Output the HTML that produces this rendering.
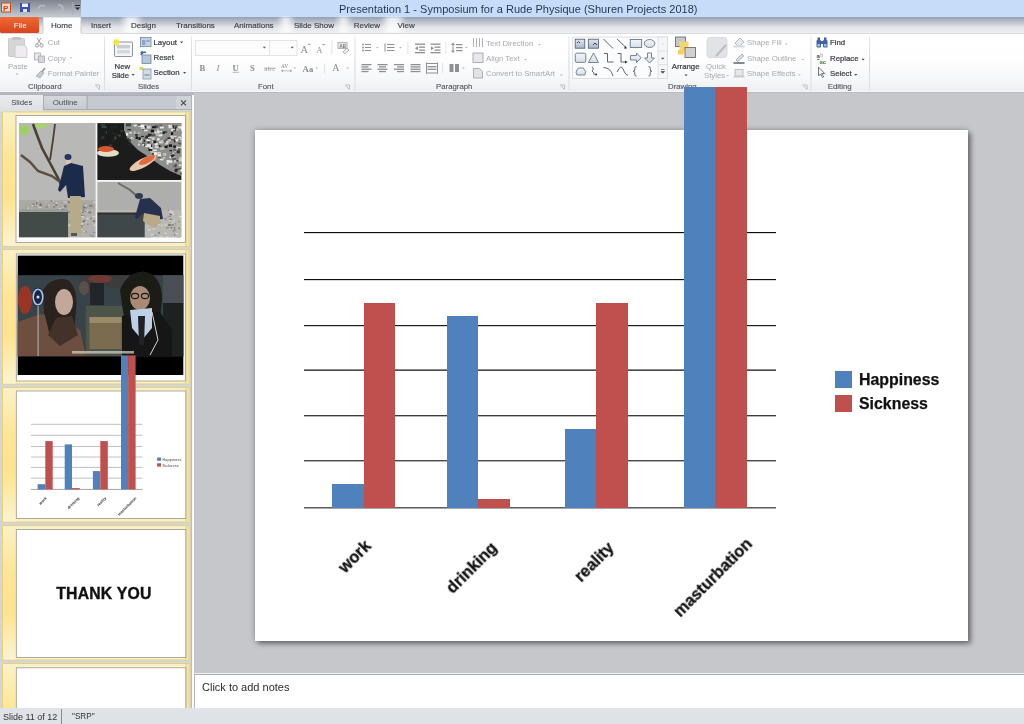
<!DOCTYPE html>
<html><head><meta charset="utf-8">
<style>
*{margin:0;padding:0;box-sizing:border-box}
html,body{width:1024px;height:724px;overflow:hidden;background:#c5c7cb;font-family:"Liberation Sans",sans-serif}
.a{position:absolute;will-change:transform}
.t{position:absolute;white-space:nowrap;line-height:1;will-change:transform}
#title{left:0;top:0;width:1024px;height:17px;background:#c8dcf6}
#qat{left:0;top:0;width:81px;height:17px;background:linear-gradient(#8f959d,#c9ced5)}
#tabs{left:0;top:17px;width:1024px;height:16px;background:linear-gradient(#aeb5bf,#e6e9ed 70%,#f4f5f7)}
#ribbon{left:0;top:33px;width:1024px;height:59px;background:linear-gradient(#fdfdfe,#f4f6f8 60%,#e9ecf0);border-top:1px solid #d5d9df}
.tab{font-size:8px;color:#3b3f45}
.rt{font-size:7.8px;color:#3a3d42}
.dis{color:#a5a8ad}
.sep{position:absolute;top:36px;width:1px;height:55px;background:#d8dce2}
.gl{font-size:7.8px;color:#5a5e64}
#pane{left:0;top:93px;width:192px;height:615px;background:#d6d9de}
#work{left:194px;top:93px;width:830px;height:581px;background:#c5c7cb}
#slide{left:255px;top:130px;width:713px;height:511px;background:#fff;box-shadow:0 0 6px rgba(0,0,0,.28),3px 3px 5px rgba(0,0,0,.38)}
#notes{left:194px;top:673px;width:830px;height:35px;background:#fff;border-top:1px solid #eef0f2;box-shadow:inset 0 1px 0 #a7abb2;border-left:1px solid #b4b8be}
#status{left:0;top:708px;width:1024px;height:16px;background:#dfe2e7}
.grid{position:absolute;left:304px;width:472px;height:1px;background:#1a1a1a}
.bar{position:absolute}
.b{background:#4f81bd}.r{background:#c0504d}
.lab{position:absolute;will-change:transform;font-size:16.3px;font-weight:bold;color:#111;-webkit-text-stroke:.3px #111;transform-origin:100% 0;transform:rotate(-45deg);white-space:nowrap;line-height:1}
.thumb{position:absolute;left:2px;width:188px;background:linear-gradient(90deg,#fbe49a,#fdf3c8 8%,#fef9e6 40%,#fdf5d3);border:1px solid #e9cf7f}
.tw{position:absolute;left:14px;width:170px;background:#fff;border:1px solid #b8b0a0}
</style></head><body>
<!--RIB-->
<svg class="a" style="left:0;top:0" width="1024" height="94" viewBox="0 0 1024 94">
<defs>
<linearGradient id="rg" x1="0" y1="0" x2="0" y2="1"><stop offset="0" stop-color="#ffffff"/><stop offset=".45" stop-color="#fefefe"/><stop offset=".75" stop-color="#f7f8f9"/><stop offset="1" stop-color="#eceef1"/></linearGradient>
<linearGradient id="tg" x1="0" y1="0" x2="0" y2="1"><stop offset="0" stop-color="#94a0b2"/><stop offset=".3" stop-color="#b9c0ca"/><stop offset=".65" stop-color="#e2e4e7"/><stop offset="1" stop-color="#eeeff1"/></linearGradient>
<filter id="glow" x="-50%" y="-20%" width="200%" height="140%"><feGaussianBlur stdDeviation="3 1"/></filter>
<linearGradient id="qg" x1="0" y1="0" x2="0" y2="1"><stop offset="0" stop-color="#7e858f"/><stop offset="1" stop-color="#c6cbd2"/></linearGradient>
<linearGradient id="fg" x1="0" y1="0" x2="0" y2="1"><stop offset="0" stop-color="#ec6a35"/><stop offset="1" stop-color="#d9441b"/></linearGradient>
<linearGradient id="sepg" x1="0" y1="0" x2="0" y2="1"><stop offset="0" stop-color="#e4e7eb"/><stop offset=".5" stop-color="#d2d6dc"/><stop offset="1" stop-color="#dfe2e6"/></linearGradient>
</defs>
<!-- title bar -->
<rect x="0" y="0" width="1024" height="17" fill="#c7dcf9"/>
<rect x="0" y="0" width="81" height="17" fill="url(#qg)"/>
<text x="339" y="12.7" font-family="Liberation Sans" font-size="11" fill="#1f3555" textLength="358.5">Presentation 1 - Symposium for a Rude Physique (Shuren Projects 2018)</text>
<!-- P icon -->
<rect x="1" y="2.5" width="10" height="10" rx="1" fill="#c94a1a"/>
<rect x="2" y="3.5" width="8" height="8" fill="#f6d5c3"/>
<text x="3" y="10.8" font-family="Liberation Sans" font-size="8" font-weight="bold" fill="#c2461c">P</text>
<!-- save -->
<rect x="20" y="3" width="10" height="9" fill="#3c4fb5"/>
<rect x="22" y="3.5" width="6" height="3.5" fill="#eef0fb"/>
<rect x="23" y="9" width="4" height="3" fill="#dfe3f5"/>
<!-- undo redo -->
<path d="M38 9 q2 -5 7 -3" stroke="#b6bac0" stroke-width="1.6" fill="none"/>
<path d="M49 7 l3 0 l-1.5 2z" fill="#9a9ea4"/>
<path d="M58 5 q5 0 5 4 q0 3 -4 3" stroke="#b9bdc3" stroke-width="1.5" fill="none"/>
<rect x="72" y="2" width="0.8" height="13" fill="#a8adb4"/>
<rect x="75" y="5" width="5" height="1" fill="#222"/>
<path d="M75 7.5 h5 l-2.5 2.6z" fill="#222"/>
<!-- tab row -->
<rect x="0" y="17" width="1024" height="16" fill="url(#tg)"/>
<g filter="url(#glow)" fill="#fff" opacity=".8">
<rect x="124" y="17" width="15" height="16"/>
<rect x="281" y="17" width="10" height="16"/>
<rect x="339" y="17" width="9" height="16"/>
<rect x="385" y="17" width="17" height="16"/>
</g>
<rect x="0" y="17" width="39" height="16" rx="1.5" fill="url(#fg)"/>
<text x="13.7" y="27.8" font-family="Liberation Sans" font-size="8" fill="#fff">File</text>
<rect x="43" y="17" width="38" height="17" fill="#fdfdfe" stroke="#bcc2ca" stroke-width=".8"/>
<g font-family="Liberation Sans" font-size="8" fill="#3d4147" stroke="#3d4147" stroke-width=".15">
<text x="51" y="27.8">Home</text>
<text x="91" y="27.8">Insert</text>
<text x="131" y="27.8">Design</text>
<text x="176" y="27.8">Transitions</text>
<text x="234" y="27.8">Animations</text>
<text x="294" y="27.8">Slide Show</text>
<text x="353.7" y="27.8">Review</text>
<text x="397.5" y="27.8">View</text>
</g>
<!-- ribbon body -->
<rect x="0" y="33" width="1024" height="59.5" fill="url(#rg)"/>
<rect x="0" y="33" width="43" height="0.8" fill="#cfd3d8"/>
<rect x="81" y="33" width="943" height="0.8" fill="#cfd3d8"/>
<rect x="0" y="91.2" width="1024" height=".8" fill="#f6f7f8"/><rect x="0" y="92" width="1024" height="2" fill="#b9bcc1"/>
<!-- separators -->
<g fill="url(#sepg)">
<rect x="104" y="36" width="1" height="55"/>
<rect x="191" y="36" width="1" height="55"/>
<rect x="354.5" y="36" width="1" height="55"/>
<rect x="568.5" y="36" width="1" height="55"/>
<rect x="810.5" y="36" width="1" height="55"/>
<rect x="869" y="36" width="1" height="55"/>
</g>
<!-- group labels -->
<g font-family="Liberation Sans" font-size="7.8" fill="#585c63" stroke="#585c63" stroke-width=".15">
<text x="28.1" y="89.3">Clipboard</text>
<text x="138" y="89.3">Slides</text>
<text x="258" y="89.3">Font</text>
<text x="436" y="89.3">Paragraph</text>
<text x="668" y="89.3">Drawing</text>
<text x="827.8" y="89.3">Editing</text>
</g>
<!-- launchers -->
<g stroke="#a6aab0" stroke-width=".7" fill="none">
<path d="M95 85 h4.5 v4.5 M96 86 l3 3"/>
<path d="M345 85 h4.5 v4.5 M346 86 l3 3"/>
<path d="M560 85 h4.5 v4.5 M561 86 l3 3"/>
<path d="M802.5 85 h4.5 v4.5 M803.5 86 l3 3"/>
</g>
<!-- Clipboard group -->
<rect x="8.5" y="38.5" width="16" height="18" rx="1" fill="#d6d6d8" stroke="#c2c2c5" stroke-width=".8"/>
<rect x="12" y="37" width="9" height="3" rx="1" fill="#c5c5c8"/>
<path d="M15 45 h9 l3 3 v9.5 h-12z" fill="#eeecef" stroke="#c5c3c8" stroke-width=".8"/>
<g font-family="Liberation Sans" font-size="7.8" fill="#a6a9ad">
<text x="7.9" y="68.8">Paste</text>
<text x="47.8" y="45.4">Cut</text>
<text x="47.8" y="60.6">Copy</text>
<text x="47.8" y="75.6">Format Painter</text>
</g>
<path d="M15.5 73.5 h3 l-1.5 1.5z" fill="#a6a9ad"/>
<path d="M69.5 57 h3 l-1.5 1.5z" fill="#c0c3c7"/>
<path d="M37 38 l4 6 M41 38 l-4 6" stroke="#9fa2a6" stroke-width="1"/>
<circle cx="37" cy="45.5" r="1.6" fill="none" stroke="#8d9094" stroke-width=".9"/>
<circle cx="41.5" cy="45.5" r="1.6" fill="none" stroke="#8d9094" stroke-width=".9"/>
<rect x="34.5" y="53" width="6" height="7" fill="#e8e8ea" stroke="#a9abae" stroke-width=".8"/>
<rect x="38.5" y="56" width="6" height="6.5" fill="#d5d6d8" stroke="#a9abae" stroke-width=".8"/>
<path d="M36 76 l5 -5 l3 2 l-4 5 z" fill="#c9cacc" stroke="#a3a5a8" stroke-width=".7"/>
<path d="M42 72 l3 -4" stroke="#8f9195" stroke-width="1.6"/>
<!-- Slides group -->

<rect x="114.5" y="42" width="18" height="14.5" rx="1" fill="#f5f6f8" stroke="#8d949d" stroke-width="1"/>
<rect x="117" y="45" width="13" height="3.5" fill="#c8ccd3"/>
<rect x="117" y="50" width="13" height="3.5" fill="#d5d9df"/>
<path d="M121.00 42.20 L118.23 43.04 L119.59 45.59 L117.04 44.23 L116.20 47.00 L115.36 44.23 L112.81 45.59 L114.17 43.04 L111.40 42.20 L114.17 41.36 L112.81 38.81 L115.36 40.17 L116.20 37.40 L117.04 40.17 L119.59 38.81 L118.23 41.36Z" fill="#f3e14c"/>
<g font-family="Liberation Sans" font-size="7.8" fill="#3a3d42" stroke="#3a3d42" stroke-width=".22">
<text x="114.6" y="68.9">New</text>
<text x="111.7" y="77.9">Slide</text>
<text x="153.5" y="45">Layout</text>
<text x="153.5" y="60.3">Reset</text>
<text x="153.5" y="75.4">Section</text>
</g>
<g fill="#444">
<path d="M131.5 74 h3.2 l-1.6 1.7z"/>
<path d="M180 41.5 h3.2 l-1.6 1.7z"/>
<path d="M183 72 h3.2 l-1.6 1.7z"/>
</g>
<rect x="140.5" y="37.5" width="10.5" height="9" fill="#c5d3e6" stroke="#6f86a6" stroke-width=".8"/>
<rect x="142" y="40" width="3.5" height="5" fill="#8ea4c4"/>
<rect x="146.5" y="40" width="3" height="2" fill="#8ea4c4"/>
<rect x="142" y="55" width="9" height="8.5" fill="#b7c6da" stroke="#6f86a6" stroke-width=".8"/>
<path d="M141 55 q1 -3.5 5 -2.5" stroke="#3a63b0" stroke-width="1.6" fill="none"/>
<path d="M140 52.5 l2.5 -2 l.5 3z" fill="#3a63b0"/>
<rect x="139.5" y="67" width="3.5" height="3" fill="#f0d24e"/>
<rect x="143" y="69" width="8" height="10" fill="#d3dbe6" stroke="#8796ab" stroke-width=".8"/>
<rect x="144.5" y="74" width="5" height="2" fill="#9aaac0"/>

<!-- Font group -->
<rect x="195.5" y="40.5" width="74" height="15" fill="#fcfcfd" stroke="#dfe2e6" stroke-width=".9"/>
<rect x="269.5" y="40.5" width="27.5" height="15" fill="#fcfcfd" stroke="#dfe2e6" stroke-width=".9"/>
<g fill="#555">
<path d="M262.8 46.8 h3.2 l-1.6 1.7z"/>
<path d="M290.6 46.8 h3.2 l-1.6 1.7z"/>
</g>
<g font-family="Liberation Serif" fill="#8c8d90">
<text x="300.6" y="52.6" font-size="10.5">A</text>
<text x="316.6" y="52.6" font-size="8">A</text>
</g>
<path d="M308 44.3 h2.5 M322.3 44.6 h2.6" stroke="#777" stroke-width=".8"/>
<rect x="331.5" y="40.5" width=".8" height="14" fill="#d9dce0"/>
<rect x="338" y="42.5" width="9" height="6" fill="#e9eaee" stroke="#a2a5aa" stroke-width=".8"/>
<text x="339.5" y="47.5" font-family="Liberation Sans" font-size="4.5" font-weight="bold" fill="#777">AB</text>
<path d="M343 52 l4 -4 l2 2 l-4 3.5z" fill="#f0f0f2" stroke="#9b9ea3" stroke-width=".8"/>
<g font-family="Liberation Serif" font-weight="bold" fill="#8a8b8e">
<text x="199.6" y="70.8" font-size="8.6">B</text>
<text x="216.5" y="70.8" font-size="8.6" font-style="italic" font-weight="normal">I</text>
<text x="232.6" y="70.8" font-size="8.6">U</text>
<text x="250" y="70.8" font-size="8.6">S</text>
<text x="264.3" y="70.8" font-size="7" font-weight="normal" textLength="11">abc</text>
<text x="281.1" y="67.8" font-size="5.5" font-weight="normal">AV</text>
<text x="302.4" y="71.9" font-size="8.6" textLength="10.8">Aa</text>
<text x="332.3" y="71.2" font-size="10" font-weight="normal">A</text>
</g>
<path d="M232.6 72.3 h6.4" stroke="#8a8b8e" stroke-width=".6"/>
<path d="M264 68.2 h11.5" stroke="#8a8b8e" stroke-width=".6"/>
<path d="M281.5 70.8 h10 M281.5 70.8 l1.5 -1 M281.5 70.8 l1.5 1 M291.5 70.8 l-1.5 -1 M291.5 70.8 l-1.5 1" stroke="#8a8b8e" stroke-width=".6"/>
<g fill="#b2b5b9">
<path d="M293.3 67.5 h2.8 l-1.4 1.5z"/>
<path d="M315.3 67.5 h2.8 l-1.4 1.5z"/>
<path d="M346.3 67.5 h2.8 l-1.4 1.5z"/>
</g>
<rect x="324" y="63.5" width=".8" height="10" fill="#d9dce0"/>
<!-- Paragraph group -->
<g fill="#8e9094">
<circle cx="363" cy="44.5" r=".9"/><circle cx="363" cy="47.5" r=".9"/><circle cx="363" cy="50.5" r=".9"/>
<rect x="365" y="44" width="6" height="1"/><rect x="365" y="47" width="6" height="1"/><rect x="365" y="50" width="6" height="1"/>
<rect x="384.5" y="43.5" width="1" height="8"/>
<rect x="387" y="44" width="7.5" height="1"/><rect x="387" y="47" width="7.5" height="1"/><rect x="387" y="50" width="7.5" height="1"/>
<rect x="415" y="43.5" width="10" height="1.3"/><rect x="419" y="46.5" width="6" height="1.3"/><rect x="419" y="49.5" width="6" height="1.3"/><rect x="415" y="52" width="10" height="1.3"/>
<rect x="430.5" y="43.5" width="10" height="1.3"/><rect x="434.5" y="46.5" width="6" height="1.3"/><rect x="434.5" y="49.5" width="6" height="1.3"/><rect x="430.5" y="52" width="10" height="1.3"/>
<path d="M415 48.3 l3 -2 v4z"/><path d="M434 48.3 l-3 -2 v4z"/>
<rect x="456" y="44" width="6.5" height="1.2"/><rect x="456" y="47" width="6.5" height="1.2"/><rect x="456" y="50" width="6.5" height="1.2"/>
<path d="M453 42.5 l2 2.5 h-4z M453 53 l2 -2.5 h-4z"/><rect x="452.5" y="44.5" width="1" height="6"/>
</g>
<g fill="#b2b5b9">
<path d="M376 47 h2.8 l-1.4 1.5z"/><path d="M399 47 h2.8 l-1.4 1.5z"/><path d="M464.8 47 h2.8 l-1.4 1.5z"/><path d="M462 67.5 h2.8 l-1.4 1.5z"/>
<path d="M538 44 h2.8 l-1.4 1.5z"/><path d="M524 59 h2.8 l-1.4 1.5z"/><path d="M560 74.5 h2.8 l-1.4 1.5z"/>
</g>
<rect x="407.5" y="42" width=".8" height="12" fill="#d9dce0"/>
<rect x="445.5" y="42" width=".8" height="12" fill="#d9dce0"/>
<rect x="442" y="63" width=".8" height="10" fill="#d9dce0"/>
<g fill="#8e9094">
<rect x="361.5" y="64" width="10" height="1.3"/><rect x="361.5" y="66.3" width="7" height="1.3"/><rect x="361.5" y="68.6" width="10" height="1.3"/><rect x="361.5" y="70.9" width="7" height="1.3"/>
<rect x="377.5" y="64" width="10" height="1.3"/><rect x="379" y="66.3" width="7" height="1.3"/><rect x="377.5" y="68.6" width="10" height="1.3"/><rect x="379" y="70.9" width="7" height="1.3"/>
<rect x="394" y="64" width="10" height="1.3"/><rect x="397" y="66.3" width="7" height="1.3"/><rect x="394" y="68.6" width="10" height="1.3"/><rect x="397" y="70.9" width="7" height="1.3"/>
<rect x="410.5" y="64" width="10" height="1.3"/><rect x="410.5" y="66.3" width="10" height="1.3"/><rect x="410.5" y="68.6" width="10" height="1.3"/><rect x="410.5" y="70.9" width="10" height="1.3"/>
<rect x="426" y="63" width="12" height="1"/><rect x="427.5" y="66" width="9" height="1.3"/><rect x="427.5" y="68.6" width="9" height="1.3"/><rect x="426" y="72.5" width="12" height="1"/>
<rect x="426" y="62.5" width="1" height="11"/><rect x="437" y="62.5" width="1" height="11"/>
<rect x="449.5" y="64" width="4" height="8"/><rect x="455" y="64" width="4" height="8"/>
</g>
<g stroke="#9b9ea3" stroke-width=".8" fill="none">
<path d="M473.5 38 v9 M476.5 38 v9 M479.5 38 v9 M482.5 38 v9"/>
<rect x="473" y="53" width="10" height="9.5" fill="#e7e8eb"/>
<path d="M473.5 68.5 h6 l3 3 v6.5 h-9z" fill="#e2e3e6"/>
</g>
<g font-family="Liberation Sans" font-size="7.8" fill="#a6a9ad">
<text x="486" y="45.8">Text Direction</text>
<text x="486" y="60.8">Align Text</text>
<text x="486" y="76.2">Convert to SmartArt</text>
</g>

<!-- Drawing group: shapes gallery -->
<defs>
<linearGradient id="shp" x1="0" y1="0" x2="0" y2="1"><stop offset="0" stop-color="#f4f6fa"/><stop offset="1" stop-color="#d5dde9"/></linearGradient>
<linearGradient id="shp2" x1="0" y1="0" x2="0" y2="1"><stop offset="0" stop-color="#dfe6ef"/><stop offset="1" stop-color="#a9b7c9"/></linearGradient>
</defs>
<rect x="572.5" y="37" width="95" height="41.5" fill="#fbfcfd" stroke="#dadde2" stroke-width=".9"/>
<rect x="658" y="37" width="9.5" height="41.5" fill="#f5f6f8" stroke="#dadde2" stroke-width=".9"/>
<path d="M658 51 h9.5 M658 64.7 h9.5" stroke="#dadde2" stroke-width=".9"/>
<path d="M661.5 44.5 h2.5 l-1.25 -1.3z" fill="#cfd2d6"/>
<path d="M661 57.8 h3.5 l-1.75 1.8z" fill="#4b4e53"/>
<path d="M661 69.5 h3.5 M661 71.5 h3.5 l-1.75 1.8z" stroke="#4b4e53" stroke-width=".7" fill="#4b4e53"/>
<g stroke="#4e5a69" stroke-width=".8" fill="url(#shp2)">
<rect x="575.2" y="39.2" width="9.6" height="9"/>
<rect x="588.3" y="39.2" width="10.2" height="9"/>
</g>
<path d="M577 43 l1.5 -1.5 l1.5 1.5 M593 45 l2 -2 l2 2" stroke="#222" stroke-width=".8" fill="none"/>
<g stroke="#3b4148" stroke-width=".8" fill="none">
<path d="M603.5 39 L613 48.5"/>
<path d="M617 39 L626 47.5"/>
<path d="M604 53.5 h3.5 v8.5 h6 M617.5 53.5 h3.5 v8.5 h5"/>
<path d="M603.5 67.5 q7 0 9.5 8.5"/>
<path d="M617 72 q4 -8 6 -3 q3 7 5 6"/>
<path d="M636.5 66.5 q-1.8 0 -1.8 2 v1.5 q0 1.3 -1.5 1.3 q1.5 0 1.5 1.3 v1.5 q0 2 1.8 2"/>
<path d="M648.5 66.5 q1.8 0 1.8 2 v1.5 q0 1.3 1.5 1.3 q-1.5 0 -1.5 1.3 v1.5 q0 2 -1.8 2"/>
<path d="M592 67 l1.5 2 l-1.5 2 l2 2 l0 2"/>
</g>
<path d="M625 46 l2.2 2.2 l-3 .5z M625 60.5 l2.5 1.5 l-2.5 1.5z" fill="#222"/>
<g stroke="#5a6878" stroke-width=".8" fill="url(#shp)">
<rect x="630.2" y="39.5" width="11.5" height="8"/>
<ellipse cx="649.6" cy="43.5" rx="5.3" ry="4"/>
<rect x="575.3" y="53.2" width="10.5" height="9.2" rx="1.5"/>
<path d="M593.5 53 L598.5 62.5 H588.5Z"/>
<path d="M630.5 55.5 h6 v-2.5 l4.7 4.8 l-4.7 4.8 v-2.6 h-6z"/>
<path d="M647.5 53 h4 v5 h3 l-5 5 l-5 -5 h3z"/>
<path d="M577 75 q-2 -3 0 -5 q1 -3 4 -2 q3 -1 3.5 2 q2 1 .8 3.5 l-.5 1.5z"/>
</g>
<circle cx="596" cy="74.5" r="1.1" fill="#444"/>
<!-- Arrange -->
<rect x="675.5" y="37" width="10" height="9.5" fill="#c8c9cc" stroke="#6c6f74" stroke-width=".9"/>
<rect x="679.5" y="41.5" width="9" height="12" fill="#f4d66c"/>
<rect x="685" y="47.5" width="10.5" height="10" fill="#cfd1d4" stroke="#6c6f74" stroke-width=".9"/>
<rect x="678" y="50" width="6.5" height="4.5" fill="#f2d160"/>
<g font-family="Liberation Sans" font-size="7.8" fill="#3a3d42" stroke="#3a3d42" stroke-width=".22">
<text x="671.8" y="68.9">Arrange</text>
</g>
<path d="M684.5 74.5 h3.2 l-1.6 1.7z" fill="#444"/>
<!-- Quick styles -->
<rect x="707" y="37.5" width="20" height="20" rx="3" fill="#e2e3e6" stroke="#d2d4d8" stroke-width=".8"/>
<path d="M716 56 l10 -11" stroke="#b9bbbf" stroke-width="2"/>
<g font-family="Liberation Sans" font-size="7.8" fill="#a6a9ad">
<text x="706" y="69">Quick</text>
<text x="704" y="77.6">Styles</text>
<text x="747" y="45.4">Shape Fill</text>
<text x="747" y="60.8">Shape Outline</text>
<text x="747" y="76.1">Shape Effects</text>
</g>
<g fill="#b6b9bd">
<path d="M726.3 75 h2.8 l-1.4 1.5z"/>
<path d="M784.8 43.5 h2.8 l-1.4 1.5z"/>
<path d="M801.5 59 h2.8 l-1.4 1.5z"/>
<path d="M798 74.5 h2.8 l-1.4 1.5z"/>
</g>
<path d="M735 43 l5 -5 l4 4 l-5 5z" fill="#e9eaec" stroke="#a5a8ac" stroke-width=".8"/>
<rect x="733.5" y="45.5" width="11" height="2" fill="#d7d9dc"/>
<path d="M736 60 l6 -6 l1.8 1.8 l-6 6z" fill="#dfe0e3" stroke="#999ca0" stroke-width=".8"/>
<rect x="733.5" y="62" width="11" height="2" fill="#85888d"/>
<rect x="735" y="69.5" width="8" height="6.5" fill="#e6e7ea" stroke="#b1b4b8" stroke-width=".8"/>
<rect x="733.5" y="76" width="11" height="1.5" fill="#c9cbcf"/>
<!-- Editing -->
<g fill="#3e63a6">
<rect x="816.5" y="40" width="4.5" height="7.5" rx="1"/>
<rect x="823" y="40" width="4.5" height="7.5" rx="1"/>
<rect x="817.5" y="37.5" width="2.5" height="3"/>
<rect x="824" y="37.5" width="2.5" height="3"/>
<rect x="820.5" y="41" width="3" height="3"/>
</g>
<rect x="817.5" y="44" width="2.5" height="2.5" fill="#a8bfe3"/>
<rect x="824" y="44" width="2.5" height="2.5" fill="#a8bfe3"/>
<text x="816.5" y="57.5" font-family="Liberation Sans" font-size="6" font-weight="bold" fill="#444">a</text>
<text x="820.3" y="56.5" font-family="Liberation Sans" font-size="5.5" fill="#9a9a9a">b</text>
<text x="819.5" y="63.5" font-family="Liberation Sans" font-size="6" font-weight="bold" fill="#3f8a3a">ac</text>
<path d="M817 59.5 h2.5" stroke="#555" stroke-width=".8"/>
<path d="M818.5 67 v9 l2 -2 l2 3.5 l1.2 -.7 l-2 -3.3 h3z" fill="#f4f4f6" stroke="#55585d" stroke-width=".8"/>
<g font-family="Liberation Sans" font-size="7.8" fill="#3a3d42" stroke="#3a3d42" stroke-width=".22">
<text x="830" y="45.2">Find</text>
<text x="830" y="60.6">Replace</text>
<text x="830" y="75.9">Select</text>
</g>
<g fill="#444">
<path d="M861.5 58.8 h3.2 l-1.6 1.7z"/>
<path d="M854.2 74 h3.2 l-1.6 1.7z"/>
</g>

<!--RIBBON-CONTENT-->
</svg>

<!--/RIB-->
<div id="pane" class="a"></div>
<!--PANE-->
<svg class="a" style="left:0;top:0" width="194" height="724" viewBox="0 0 194 724">
<defs>
<linearGradient id="band" x1="0" y1="0" x2="0" y2="1">
<stop offset="0" stop-color="#fbf1c6"/><stop offset=".35" stop-color="#fde596"/><stop offset=".65" stop-color="#fde490"/><stop offset="1" stop-color="#fbf3d2"/></linearGradient>
<linearGradient id="rband" x1="0" y1="0" x2="1" y2="0"><stop offset="0" stop-color="#e2cd86"/><stop offset=".5" stop-color="#f8e7a4"/><stop offset="1" stop-color="#dcd4b4"/></linearGradient>
<linearGradient id="tabA" x1="0" y1="0" x2="0" y2="1"><stop offset="0" stop-color="#e9ebee"/><stop offset="1" stop-color="#dcdfe4"/></linearGradient>
<linearGradient id="tabB" x1="0" y1="0" x2="0" y2="1"><stop offset="0" stop-color="#d4d7dc"/><stop offset="1" stop-color="#c7cad0"/></linearGradient>
<filter id="bl2" x="0" y="0" width="100%" height="100%"><feGaussianBlur stdDeviation="0.45"/></filter>
<filter id="bl" x="-5%" y="-5%" width="110%" height="110%"><feGaussianBlur stdDeviation="0.7"/></filter>
<g id="frm">
<rect x="2.5" y="0" width="187.5" height="134.5" fill="#faf0c6" stroke="#e8d07f" stroke-width="1"/>
<rect x="3" y="0.5" width="13" height="133.5" fill="url(#band)"/>
<rect x="185.5" y="0.5" width="4.5" height="133.5" fill="url(#rband)"/>
</g>
</defs>
<!-- pane bg -->
<rect x="0" y="93" width="192" height="615" fill="#d2d5da"/>
<rect x="191" y="93" width="1" height="615" fill="#b9bdc3"/><rect x="192" y="93" width="2" height="615" fill="#fafbfc"/><rect x="194" y="93" width=".8" height="580" fill="#b3b7bd"/>
<rect x="0" y="92" width="194" height="3" fill="#b3b7bd"/>
<!-- tabs -->
<rect x="0" y="95" width="43.5" height="17" fill="url(#tabA)"/>
<rect x="43.5" y="95.5" width="43.7" height="14" fill="url(#tabB)" stroke="#a9adb4" stroke-width="1"/>
<rect x="87.2" y="95.5" width="103.8" height="14" fill="#c6c9cf" stroke="#a9adb4" stroke-width="1"/>
<text x="11.2" y="104.8" font-family="Liberation Sans" font-size="7.75" fill="#3c3f44">Slides</text>
<text x="52.7" y="104.8" font-family="Liberation Sans" font-size="7.9" fill="#4a4d52">Outline</text>
<rect x="176" y="96" width="15" height="13" fill="#cfd2d7"/><path d="M181 100.3 l5 5 M186 100.3 l-5 5" stroke="#45484d" stroke-width="1.1"/>
<!-- frames -->
<use href="#frm" transform="translate(0,112)"/>
<use href="#frm" transform="translate(0,249.5)"/>
<use href="#frm" transform="translate(0,387.5)"/>
<use href="#frm" transform="translate(0,525.5)"/>
<use href="#frm" transform="translate(0,663.5)"/>
<!-- slide 1 -->
<rect x="16" y="115.5" width="169.5" height="127" fill="#fff" stroke="#9a978f" stroke-width=".8"/>
<!-- thumb1 photos -->
<clipPath id="c1"><rect x="18.8" y="123.1" width="162.8" height="114.5"/></clipPath>
<g clip-path="url(#c1)"><g filter="url(#bl2)">
<rect x="18.8" y="123.1" width="76.9" height="114.5" fill="#b3b3b1"/>
<rect x="18.8" y="123.1" width="76.9" height="77" fill="#b8b8b6"/>
<rect x="18.8" y="200.3" width="76.9" height="9" fill="#a9a8a3"/>
<rect x="68" y="209" width="27.7" height="28.6" fill="#b2b0aa"/>
<rect x="18.8" y="209" width="49.3" height="3" fill="#9a9d9a"/>
<rect x="18.8" y="212" width="49.3" height="25.6" fill="#434c47"/>
<rect x="97.2" y="123.1" width="84.4" height="57" fill="#1a1c1a"/>
<path d="M124 123 L181.6 123 L181.6 176 L170 171 L160 165 L150 158 L138 150 L128 140 L124 130 Z" fill="#8d8f8c"/>
<rect x="97.2" y="181.6" width="84.4" height="56" fill="#aeaeac"/>
<rect x="97.2" y="210" width="84.4" height="27.6" fill="#b9b7b1"/>
<rect x="97.2" y="214" width="47.5" height="23.6" fill="#41464a"/>
<rect x="97.2" y="212.5" width="47.5" height="2" fill="#2d302e"/>
<g><rect x="160.0" y="126.6" width="3.8" height="1.9" fill="#e6e6e2"/><rect x="155.7" y="133.2" width="2.7" height="2.7" fill="#b9bab6"/><rect x="174.0" y="150.8" width="1.5" height="2.6" fill="#b9bab6"/><rect x="171.4" y="137.4" width="3.3" height="2.8" fill="#555755"/><rect x="174.6" y="128.3" width="2.7" height="1.5" fill="#d0d0cc"/><rect x="173.3" y="145.4" width="2.5" height="1.7" fill="#141414"/><rect x="157.7" y="154.0" width="3.2" height="2.9" fill="#f2f2ee"/><rect x="162.7" y="131.7" width="2.3" height="2.1" fill="#141414"/><rect x="156.9" y="128.6" width="2.0" height="2.7" fill="#b9bab6"/><rect x="157.0" y="138.2" width="2.7" height="2.3" fill="#e6e6e2"/><rect x="151.9" y="141.3" width="2.5" height="1.3" fill="#e6e6e2"/><rect x="174.3" y="125.4" width="3.4" height="1.8" fill="#555755"/><rect x="157.8" y="152.2" width="2.8" height="3.0" fill="#f2f2ee"/><rect x="141.8" y="127.2" width="2.8" height="2.9" fill="#555755"/><rect x="180.0" y="138.5" width="1.9" height="1.1" fill="#f2f2ee"/><rect x="174.0" y="139.7" width="3.7" height="1.8" fill="#d0d0cc"/><rect x="150.5" y="150.6" width="3.7" height="2.4" fill="#b9bab6"/><rect x="170.7" y="137.5" width="3.3" height="1.5" fill="#b9bab6"/><rect x="154.0" y="152.1" width="3.5" height="3.0" fill="#e6e6e2"/><rect x="142.1" y="143.0" width="3.1" height="1.1" fill="#555755"/><rect x="160.1" y="147.8" width="3.8" height="2.2" fill="#b9bab6"/><rect x="160.2" y="138.9" width="2.3" height="1.7" fill="#555755"/><rect x="142.0" y="142.6" width="2.2" height="2.6" fill="#555755"/><rect x="180.0" y="159.3" width="2.3" height="1.4" fill="#d0d0cc"/><rect x="170.3" y="135.7" width="3.2" height="2.3" fill="#d0d0cc"/><rect x="178.7" y="158.8" width="2.6" height="2.7" fill="#d0d0cc"/><rect x="150.0" y="135.0" width="1.6" height="2.9" fill="#e6e6e2"/><rect x="158.0" y="145.4" width="3.5" height="1.5" fill="#555755"/><rect x="144.0" y="145.2" width="2.9" height="1.1" fill="#2a2a2a"/><rect x="147.8" y="133.7" width="3.9" height="2.8" fill="#2a2a2a"/><rect x="180.8" y="146.1" width="2.1" height="2.5" fill="#b9bab6"/><rect x="172.2" y="158.2" width="3.9" height="2.1" fill="#555755"/><rect x="175.2" y="168.7" width="3.0" height="1.6" fill="#141414"/><rect x="170.7" y="125.5" width="3.2" height="2.8" fill="#141414"/><rect x="175.6" y="170.7" width="1.6" height="2.0" fill="#555755"/><rect x="137.8" y="124.1" width="2.5" height="2.9" fill="#555755"/><rect x="159.3" y="141.2" width="3.9" height="2.1" fill="#f2f2ee"/><rect x="170.7" y="126.3" width="2.0" height="2.1" fill="#d0d0cc"/><rect x="171.0" y="132.2" width="2.2" height="2.8" fill="#141414"/><rect x="152.1" y="153.3" width="1.6" height="1.5" fill="#2a2a2a"/><rect x="148.4" y="148.1" width="3.5" height="2.7" fill="#141414"/><rect x="168.7" y="125.5" width="1.7" height="2.9" fill="#e6e6e2"/><rect x="173.2" y="127.7" width="2.7" height="1.3" fill="#555755"/><rect x="146.4" y="139.2" width="2.0" height="1.7" fill="#f2f2ee"/><rect x="165.2" y="143.2" width="2.9" height="1.1" fill="#e6e6e2"/><rect x="167.8" y="139.8" width="2.5" height="1.0" fill="#b9bab6"/><rect x="136.6" y="137.4" width="1.7" height="1.8" fill="#555755"/><rect x="177.9" y="142.9" width="3.5" height="1.5" fill="#555755"/><rect x="150.7" y="129.6" width="3.3" height="2.7" fill="#141414"/><rect x="154.5" y="143.0" width="3.3" height="2.1" fill="#e6e6e2"/><rect x="168.6" y="125.4" width="2.9" height="2.3" fill="#e6e6e2"/><rect x="140.4" y="138.9" width="1.6" height="2.5" fill="#e6e6e2"/><rect x="177.8" y="126.3" width="3.7" height="1.4" fill="#f2f2ee"/><rect x="161.2" y="147.1" width="3.4" height="1.8" fill="#b9bab6"/><rect x="145.2" y="144.1" width="2.9" height="2.9" fill="#f2f2ee"/><rect x="145.6" y="135.5" width="3.6" height="2.9" fill="#2a2a2a"/><rect x="163.5" y="131.4" width="3.7" height="1.3" fill="#2a2a2a"/><rect x="176.8" y="150.5" width="3.0" height="2.7" fill="#2a2a2a"/><rect x="177.8" y="168.1" width="3.9" height="1.6" fill="#555755"/><rect x="164.6" y="145.0" width="3.0" height="3.0" fill="#141414"/><rect x="175.2" y="139.4" width="2.7" height="1.8" fill="#f2f2ee"/><rect x="171.3" y="152.6" width="4.0" height="1.1" fill="#2a2a2a"/><rect x="178.6" y="164.5" width="2.7" height="1.5" fill="#e6e6e2"/><rect x="173.2" y="135.9" width="3.4" height="1.3" fill="#d0d0cc"/><rect x="159.8" y="158.8" width="3.7" height="1.5" fill="#e6e6e2"/><rect x="173.8" y="139.7" width="1.7" height="2.6" fill="#2a2a2a"/><rect x="130.8" y="137.1" width="1.6" height="1.9" fill="#f2f2ee"/><rect x="166.3" y="140.9" width="2.3" height="1.9" fill="#e6e6e2"/><rect x="152.0" y="134.2" width="3.4" height="2.0" fill="#555755"/><rect x="174.9" y="127.1" width="1.8" height="2.8" fill="#2a2a2a"/><rect x="176.3" y="128.2" width="2.4" height="2.5" fill="#b9bab6"/><rect x="167.6" y="138.7" width="3.2" height="2.9" fill="#b9bab6"/><rect x="171.1" y="128.8" width="3.2" height="2.1" fill="#f2f2ee"/><rect x="163.1" y="153.1" width="3.1" height="2.5" fill="#d0d0cc"/><rect x="177.0" y="147.1" width="3.8" height="1.3" fill="#e6e6e2"/><rect x="158.4" y="152.5" width="2.0" height="2.0" fill="#b9bab6"/><rect x="169.1" y="160.4" width="3.3" height="2.5" fill="#e6e6e2"/><rect x="144.7" y="137.2" width="1.6" height="1.3" fill="#2a2a2a"/><rect x="151.6" y="137.5" width="3.4" height="1.7" fill="#b9bab6"/><rect x="143.2" y="144.4" width="3.5" height="1.1" fill="#555755"/><rect x="163.3" y="153.0" width="1.8" height="2.4" fill="#b9bab6"/><rect x="173.5" y="165.3" width="2.8" height="2.1" fill="#555755"/><rect x="135.6" y="136.3" width="2.2" height="2.7" fill="#141414"/><rect x="149.6" y="144.6" width="2.5" height="2.1" fill="#141414"/><rect x="157.6" y="156.6" width="3.2" height="1.6" fill="#555755"/><rect x="173.5" y="148.7" width="2.0" height="2.3" fill="#555755"/><rect x="137.5" y="132.3" width="2.7" height="1.4" fill="#b9bab6"/><rect x="154.5" y="125.1" width="3.8" height="2.9" fill="#555755"/><rect x="130.4" y="138.1" width="3.7" height="1.3" fill="#b9bab6"/><rect x="169.6" y="156.1" width="1.6" height="2.2" fill="#e6e6e2"/><rect x="153.1" y="149.5" width="3.8" height="1.6" fill="#e6e6e2"/><rect x="174.1" y="159.8" width="1.7" height="2.7" fill="#d0d0cc"/><rect x="168.7" y="124.9" width="3.3" height="1.7" fill="#e6e6e2"/><rect x="173.6" y="146.2" width="2.1" height="1.6" fill="#141414"/><rect x="169.3" y="144.7" width="2.0" height="1.3" fill="#141414"/><rect x="155.0" y="145.4" width="2.7" height="1.0" fill="#b9bab6"/><rect x="149.3" y="147.2" width="3.3" height="1.7" fill="#e6e6e2"/><rect x="158.4" y="134.9" width="3.5" height="1.5" fill="#e6e6e2"/><rect x="154.7" y="131.5" width="1.9" height="1.8" fill="#e6e6e2"/><rect x="133.7" y="124.6" width="3.0" height="1.9" fill="#e6e6e2"/><rect x="147.2" y="139.9" width="3.3" height="1.1" fill="#e6e6e2"/><rect x="147.2" y="144.1" width="3.8" height="2.8" fill="#e6e6e2"/><rect x="137.9" y="143.7" width="1.9" height="2.2" fill="#d0d0cc"/><rect x="144.0" y="129.7" width="3.5" height="1.6" fill="#e6e6e2"/><rect x="180.5" y="172.9" width="3.8" height="1.6" fill="#141414"/><rect x="138.4" y="137.2" width="2.3" height="3.0" fill="#141414"/><rect x="142.3" y="126.1" width="3.9" height="2.2" fill="#2a2a2a"/><rect x="129.2" y="132.1" width="2.7" height="1.4" fill="#e6e6e2"/><rect x="153.4" y="140.6" width="2.7" height="2.6" fill="#141414"/><rect x="173.0" y="129.2" width="2.9" height="2.1" fill="#2a2a2a"/><rect x="168.8" y="144.4" width="3.3" height="2.5" fill="#141414"/><rect x="172.1" y="152.4" width="2.4" height="1.8" fill="#d0d0cc"/><rect x="151.7" y="137.4" width="2.8" height="2.5" fill="#d0d0cc"/><rect x="176.7" y="160.0" width="1.6" height="1.3" fill="#2a2a2a"/><rect x="162.1" y="140.0" width="3.6" height="2.3" fill="#555755"/><rect x="174.6" y="169.2" width="2.7" height="2.7" fill="#2a2a2a"/><rect x="143.5" y="139.6" width="1.7" height="2.3" fill="#2a2a2a"/><rect x="137.9" y="125.7" width="3.8" height="1.3" fill="#d0d0cc"/><rect x="180.8" y="129.0" width="3.9" height="1.4" fill="#f2f2ee"/><rect x="156.4" y="145.3" width="3.8" height="1.6" fill="#141414"/><rect x="174.9" y="164.5" width="1.9" height="1.2" fill="#2a2a2a"/><rect x="171.5" y="129.1" width="3.6" height="1.2" fill="#e6e6e2"/><rect x="178.3" y="136.6" width="2.7" height="1.4" fill="#e6e6e2"/><rect x="171.8" y="155.7" width="2.7" height="2.3" fill="#b9bab6"/><rect x="164.3" y="144.4" width="2.6" height="1.2" fill="#b9bab6"/><rect x="172.1" y="154.5" width="2.4" height="1.2" fill="#141414"/><rect x="161.0" y="141.2" width="2.7" height="1.1" fill="#d0d0cc"/><rect x="158.9" y="134.4" width="3.6" height="1.1" fill="#f2f2ee"/><rect x="138.5" y="140.2" width="3.8" height="2.5" fill="#b9bab6"/><rect x="154.9" y="145.3" width="3.8" height="2.9" fill="#d0d0cc"/><rect x="177.0" y="138.5" width="2.0" height="1.2" fill="#e6e6e2"/><rect x="165.6" y="138.7" width="1.7" height="1.9" fill="#555755"/><rect x="135.2" y="134.1" width="2.6" height="1.7" fill="#2a2a2a"/><rect x="166.7" y="162.6" width="1.9" height="1.9" fill="#f2f2ee"/><rect x="176.3" y="146.6" width="1.9" height="2.5" fill="#d0d0cc"/><rect x="180.4" y="169.4" width="3.9" height="1.9" fill="#f2f2ee"/><rect x="178.1" y="148.2" width="2.1" height="2.9" fill="#555755"/><rect x="140.6" y="124.7" width="3.7" height="2.6" fill="#f2f2ee"/><rect x="141.1" y="135.9" width="2.8" height="1.0" fill="#141414"/><rect x="160.2" y="131.0" width="1.9" height="1.1" fill="#e6e6e2"/><rect x="126.0" y="132.9" width="2.2" height="2.8" fill="#e6e6e2"/><rect x="172.1" y="155.0" width="1.7" height="1.6" fill="#141414"/><rect x="148.1" y="136.9" width="1.6" height="1.1" fill="#e6e6e2"/><rect x="181.4" y="131.9" width="3.5" height="1.5" fill="#141414"/><rect x="169.5" y="150.0" width="2.3" height="1.3" fill="#141414"/><rect x="152.0" y="126.3" width="3.8" height="1.9" fill="#141414"/><rect x="170.9" y="155.0" width="2.4" height="2.3" fill="#2a2a2a"/><rect x="140.9" y="127.0" width="4.0" height="2.1" fill="#d0d0cc"/><rect x="147.5" y="141.7" width="2.2" height="1.5" fill="#2a2a2a"/><rect x="157.2" y="130.5" width="2.5" height="2.7" fill="#e6e6e2"/><rect x="159.3" y="124.7" width="3.0" height="1.2" fill="#555755"/><rect x="167.4" y="137.3" width="3.2" height="1.7" fill="#2a2a2a"/><rect x="179.3" y="157.1" width="2.3" height="1.7" fill="#d0d0cc"/><rect x="146.8" y="125.7" width="3.9" height="2.9" fill="#d0d0cc"/><rect x="142.3" y="143.9" width="1.6" height="1.8" fill="#f2f2ee"/><rect x="166.5" y="160.0" width="3.4" height="2.7" fill="#e6e6e2"/><rect x="179.4" y="126.8" width="4.0" height="1.9" fill="#f2f2ee"/><rect x="133.7" y="131.0" width="1.9" height="3.0" fill="#b9bab6"/><rect x="162.9" y="157.3" width="2.5" height="1.4" fill="#d0d0cc"/><rect x="160.1" y="139.6" width="3.6" height="2.7" fill="#b9bab6"/><rect x="98.7" y="144.1" width="2.6" height="2.6" fill="#1e2620"/><rect x="110.5" y="127.1" width="2.8" height="1.3" fill="#2c3a30"/><rect x="101.7" y="125.9" width="4.8" height="2.2" fill="#3a4a3e"/><rect x="126.0" y="123.3" width="5.0" height="3.0" fill="#3a4a3e"/><rect x="104.8" y="130.9" width="2.3" height="2.7" fill="#3a4a3e"/><rect x="111.8" y="139.3" width="4.2" height="2.6" fill="#1e2620"/><rect x="114.7" y="133.3" width="2.9" height="1.3" fill="#1e2620"/><rect x="111.3" y="131.5" width="2.9" height="2.5" fill="#1e2620"/><rect x="120.2" y="129.7" width="3.0" height="2.7" fill="#2c3a30"/><rect x="101.2" y="136.3" width="3.2" height="2.7" fill="#2c3a30"/><rect x="100.7" y="123.4" width="4.4" height="3.0" fill="#2c3a30"/><rect x="118.3" y="134.6" width="2.3" height="2.1" fill="#3a4a3e"/><rect x="110.8" y="126.3" width="2.7" height="1.9" fill="#1e2620"/><rect x="114.6" y="137.0" width="3.1" height="2.2" fill="#1e2620"/><rect x="127.4" y="143.6" width="4.5" height="1.6" fill="#1e2620"/><rect x="127.3" y="129.0" width="3.8" height="1.4" fill="#2c3a30"/><rect x="127.9" y="139.1" width="2.8" height="2.9" fill="#2c3a30"/><rect x="111.1" y="133.6" width="4.4" height="1.4" fill="#1e2620"/><rect x="116.3" y="134.5" width="2.2" height="1.8" fill="#1e2620"/><rect x="114.1" y="136.5" width="2.2" height="2.7" fill="#3a4a3e"/><rect x="109.0" y="144.6" width="3.5" height="1.1" fill="#3a4a3e"/><rect x="112.4" y="125.7" width="4.6" height="2.4" fill="#1e2620"/><rect x="108.3" y="129.7" width="3.1" height="1.9" fill="#1e2620"/><rect x="125.2" y="138.1" width="3.8" height="1.3" fill="#2c3a30"/><rect x="104.0" y="131.2" width="2.0" height="2.8" fill="#1e2620"/><rect x="34.9" y="204.2" width="1.1" height="1.4" fill="#cfcdc7"/><rect x="89.6" y="205.0" width="2.7" height="1.8" fill="#777570"/><rect x="89.0" y="204.3" width="2.0" height="1.9" fill="#8f8e8a"/><rect x="36.1" y="201.7" width="1.6" height="1.0" fill="#777570"/><rect x="82.1" y="205.6" width="1.9" height="1.8" fill="#8f8e8a"/><rect x="48.2" y="204.7" width="1.9" height="1.0" fill="#cfcdc7"/><rect x="34.5" y="205.9" width="1.9" height="0.9" fill="#777570"/><rect x="94.1" y="206.4" width="1.1" height="1.9" fill="#8f8e8a"/><rect x="76.2" y="203.2" width="1.6" height="1.9" fill="#8f8e8a"/><rect x="67.4" y="201.3" width="2.3" height="1.9" fill="#777570"/><rect x="36.2" y="203.2" width="2.9" height="0.9" fill="#bdbbb5"/><rect x="58.6" y="208.2" width="2.1" height="0.9" fill="#cfcdc7"/><rect x="36.7" y="204.5" width="1.6" height="2.0" fill="#bdbbb5"/><rect x="69.7" y="205.0" width="2.1" height="1.2" fill="#cfcdc7"/><rect x="64.0" y="205.4" width="2.2" height="1.2" fill="#777570"/><rect x="77.9" y="208.2" width="1.9" height="1.7" fill="#cfcdc7"/><rect x="84.8" y="205.9" width="2.7" height="1.1" fill="#bdbbb5"/><rect x="82.1" y="208.5" width="2.9" height="1.4" fill="#8f8e8a"/><rect x="83.6" y="203.2" width="1.7" height="1.1" fill="#8f8e8a"/><rect x="86.5" y="206.3" width="1.5" height="1.2" fill="#8f8e8a"/><rect x="36.0" y="202.9" width="1.5" height="1.6" fill="#777570"/><rect x="45.0" y="201.4" width="1.6" height="1.0" fill="#cfcdc7"/><rect x="31.7" y="204.6" width="1.4" height="1.6" fill="#cfcdc7"/><rect x="65.7" y="202.0" width="2.2" height="1.3" fill="#bdbbb5"/><rect x="32.4" y="203.1" width="1.1" height="1.7" fill="#777570"/><rect x="84.9" y="204.7" width="1.5" height="1.9" fill="#cfcdc7"/><rect x="71.5" y="202.4" width="1.7" height="2.0" fill="#bdbbb5"/><rect x="56.0" y="202.0" width="1.7" height="1.7" fill="#bdbbb5"/><rect x="63.7" y="201.4" width="2.7" height="1.4" fill="#cfcdc7"/><rect x="60.3" y="207.8" width="1.7" height="0.9" fill="#bdbbb5"/><rect x="45.5" y="205.9" width="2.4" height="2.0" fill="#8f8e8a"/><rect x="64.4" y="205.5" width="2.1" height="2.0" fill="#777570"/><rect x="83.1" y="206.9" width="2.8" height="1.3" fill="#777570"/><rect x="61.8" y="207.0" width="2.0" height="1.5" fill="#bdbbb5"/><rect x="38.0" y="206.4" width="2.4" height="1.2" fill="#bdbbb5"/><rect x="31.3" y="208.3" width="1.3" height="1.3" fill="#bdbbb5"/><rect x="33.9" y="204.0" width="1.2" height="0.9" fill="#777570"/><rect x="55.9" y="202.2" width="1.2" height="1.5" fill="#cfcdc7"/><rect x="27.8" y="203.8" width="1.8" height="0.9" fill="#777570"/><rect x="40.1" y="203.2" width="1.2" height="1.9" fill="#777570"/><rect x="55.5" y="204.2" width="1.7" height="1.6" fill="#777570"/><rect x="39.2" y="207.1" width="2.3" height="1.1" fill="#cfcdc7"/><rect x="38.7" y="203.5" width="2.8" height="0.9" fill="#777570"/><rect x="72.9" y="206.9" width="3.0" height="1.2" fill="#cfcdc7"/><rect x="27.6" y="207.5" width="1.3" height="1.6" fill="#cfcdc7"/><rect x="39.5" y="204.8" width="2.8" height="1.3" fill="#777570"/><rect x="51.7" y="205.3" width="3.0" height="1.3" fill="#bdbbb5"/><rect x="41.5" y="202.8" width="1.3" height="0.8" fill="#bdbbb5"/><rect x="52.0" y="200.5" width="2.0" height="1.9" fill="#cfcdc7"/><rect x="84.0" y="206.7" width="1.5" height="1.6" fill="#777570"/><rect x="62.1" y="208.7" width="1.4" height="1.0" fill="#777570"/><rect x="94.2" y="206.8" width="1.9" height="1.1" fill="#bdbbb5"/><rect x="27.8" y="203.4" width="1.5" height="0.9" fill="#cfcdc7"/><rect x="24.9" y="206.3" width="1.0" height="0.9" fill="#8f8e8a"/><rect x="79.2" y="203.8" width="2.1" height="1.6" fill="#bdbbb5"/><rect x="52.8" y="202.0" width="1.1" height="1.6" fill="#8f8e8a"/><rect x="50.7" y="200.6" width="2.0" height="1.2" fill="#777570"/><rect x="93.5" y="201.4" width="1.8" height="1.8" fill="#cfcdc7"/><rect x="53.0" y="206.2" width="2.3" height="1.3" fill="#777570"/><rect x="37.0" y="200.5" width="1.5" height="1.3" fill="#cfcdc7"/><rect x="70.7" y="218.0" width="2.1" height="1.5" fill="#8f8e8a"/><rect x="76.0" y="209.7" width="2.2" height="1.1" fill="#8f8e8a"/><rect x="80.6" y="223.6" width="2.3" height="1.7" fill="#dddbd5"/><rect x="82.4" y="221.2" width="2.6" height="1.0" fill="#777570"/><rect x="80.5" y="224.2" width="2.9" height="1.5" fill="#777570"/><rect x="85.3" y="221.5" width="1.6" height="1.4" fill="#cfcdc7"/><rect x="74.3" y="224.0" width="1.2" height="1.4" fill="#777570"/><rect x="81.3" y="216.1" width="1.0" height="0.8" fill="#dddbd5"/><rect x="85.2" y="210.7" width="2.8" height="0.9" fill="#dddbd5"/><rect x="86.7" y="217.7" width="2.0" height="1.7" fill="#dddbd5"/><rect x="90.2" y="217.8" width="1.8" height="1.6" fill="#8f8e8a"/><rect x="71.1" y="228.5" width="1.2" height="1.7" fill="#cfcdc7"/><rect x="82.7" y="231.0" width="2.3" height="0.9" fill="#cfcdc7"/><rect x="86.7" y="223.7" width="2.0" height="1.2" fill="#8f8e8a"/><rect x="81.8" y="211.5" width="2.1" height="1.3" fill="#777570"/><rect x="80.9" y="226.2" width="1.6" height="1.4" fill="#8f8e8a"/><rect x="85.6" y="231.5" width="1.4" height="0.9" fill="#777570"/><rect x="75.3" y="222.7" width="2.0" height="1.0" fill="#dddbd5"/><rect x="77.3" y="210.7" width="3.0" height="0.9" fill="#cfcdc7"/><rect x="79.1" y="220.0" width="1.2" height="1.0" fill="#777570"/><rect x="81.9" y="216.3" width="2.1" height="1.2" fill="#dddbd5"/><rect x="79.9" y="210.1" width="1.7" height="1.7" fill="#dddbd5"/><rect x="75.5" y="215.3" width="2.8" height="1.7" fill="#cfcdc7"/><rect x="68.9" y="220.8" width="2.2" height="1.3" fill="#8f8e8a"/><rect x="81.2" y="223.4" width="2.2" height="1.4" fill="#dddbd5"/><rect x="69.6" y="225.0" width="2.8" height="1.0" fill="#cfcdc7"/><rect x="92.7" y="231.9" width="3.0" height="1.0" fill="#8f8e8a"/><rect x="89.5" y="234.7" width="1.2" height="1.1" fill="#8f8e8a"/><rect x="93.4" y="224.7" width="2.8" height="1.3" fill="#cfcdc7"/><rect x="72.0" y="215.2" width="2.0" height="1.6" fill="#dddbd5"/><rect x="82.2" y="209.8" width="2.2" height="1.2" fill="#8f8e8a"/><rect x="83.3" y="215.1" width="1.6" height="0.9" fill="#8f8e8a"/><rect x="92.6" y="216.0" width="2.7" height="1.2" fill="#cfcdc7"/><rect x="88.5" y="211.6" width="2.5" height="1.8" fill="#777570"/><rect x="73.7" y="229.9" width="2.0" height="1.2" fill="#8f8e8a"/><rect x="91.2" y="235.7" width="2.6" height="0.9" fill="#777570"/><rect x="74.9" y="214.8" width="1.7" height="1.1" fill="#cfcdc7"/><rect x="73.5" y="226.9" width="1.9" height="1.1" fill="#8f8e8a"/><rect x="82.8" y="220.3" width="2.7" height="1.4" fill="#777570"/><rect x="80.5" y="214.8" width="2.3" height="0.9" fill="#777570"/><rect x="92.9" y="220.4" width="2.6" height="1.7" fill="#777570"/><rect x="74.6" y="230.4" width="1.0" height="1.8" fill="#8f8e8a"/><rect x="77.5" y="213.9" width="1.1" height="1.7" fill="#777570"/><rect x="84.8" y="210.9" width="2.1" height="0.8" fill="#777570"/><rect x="80.3" y="229.2" width="2.0" height="0.9" fill="#cfcdc7"/><rect x="72.7" y="233.2" width="1.6" height="1.8" fill="#dddbd5"/><rect x="73.5" y="222.2" width="1.7" height="1.2" fill="#dddbd5"/><rect x="68.3" y="224.6" width="2.1" height="1.4" fill="#dddbd5"/><rect x="68.3" y="211.1" width="1.4" height="2.0" fill="#777570"/><rect x="71.2" y="233.8" width="2.5" height="2.0" fill="#cfcdc7"/><rect x="156.3" y="220.0" width="2.7" height="1.8" fill="#8f8e8a"/><rect x="177.1" y="237.0" width="3.0" height="1.0" fill="#8f8e8a"/><rect x="168.3" y="223.9" width="2.5" height="1.8" fill="#777570"/><rect x="181.6" y="228.7" width="1.2" height="1.7" fill="#8f8e8a"/><rect x="169.3" y="215.6" width="1.6" height="1.6" fill="#8f8e8a"/><rect x="145.8" y="215.8" width="1.1" height="1.4" fill="#dddbd5"/><rect x="179.3" y="215.9" width="2.5" height="1.5" fill="#dddbd5"/><rect x="173.0" y="229.3" width="2.7" height="1.6" fill="#8f8e8a"/><rect x="168.5" y="210.4" width="1.3" height="1.8" fill="#dddbd5"/><rect x="161.1" y="224.4" width="1.3" height="1.7" fill="#dddbd5"/><rect x="174.2" y="233.7" width="1.2" height="1.7" fill="#777570"/><rect x="164.8" y="219.2" width="1.5" height="1.9" fill="#dddbd5"/><rect x="164.5" y="218.1" width="2.5" height="1.7" fill="#777570"/><rect x="155.6" y="212.0" width="2.5" height="1.5" fill="#dddbd5"/><rect x="159.6" y="236.5" width="2.6" height="1.9" fill="#dddbd5"/><rect x="167.8" y="210.2" width="1.9" height="0.9" fill="#777570"/><rect x="168.3" y="224.6" width="2.2" height="1.4" fill="#777570"/><rect x="164.0" y="223.6" width="2.7" height="2.0" fill="#cfcdc7"/><rect x="147.9" y="229.1" width="2.6" height="1.3" fill="#dddbd5"/><rect x="150.8" y="233.6" width="2.9" height="1.9" fill="#cfcdc7"/><rect x="154.4" y="237.4" width="2.3" height="1.1" fill="#cfcdc7"/><rect x="169.6" y="213.3" width="2.3" height="1.8" fill="#777570"/><rect x="169.5" y="210.0" width="1.6" height="1.5" fill="#dddbd5"/><rect x="178.4" y="227.6" width="1.4" height="1.4" fill="#777570"/><rect x="165.5" y="218.6" width="1.7" height="0.9" fill="#dddbd5"/><rect x="165.1" y="220.0" width="1.7" height="0.8" fill="#8f8e8a"/><rect x="146.1" y="214.4" width="1.3" height="1.2" fill="#8f8e8a"/><rect x="175.1" y="223.2" width="1.0" height="1.5" fill="#8f8e8a"/><rect x="169.7" y="218.8" width="2.1" height="1.2" fill="#777570"/><rect x="173.7" y="219.6" width="1.3" height="1.3" fill="#dddbd5"/><rect x="170.6" y="211.6" width="2.7" height="1.9" fill="#dddbd5"/><rect x="170.5" y="227.0" width="1.8" height="1.2" fill="#777570"/><rect x="145.0" y="236.6" width="1.8" height="0.9" fill="#8f8e8a"/><rect x="170.1" y="221.7" width="2.4" height="1.8" fill="#cfcdc7"/><rect x="146.3" y="217.3" width="1.4" height="1.9" fill="#777570"/><rect x="157.5" y="221.4" width="2.9" height="1.6" fill="#8f8e8a"/><rect x="157.9" y="224.0" width="1.7" height="1.2" fill="#dddbd5"/><rect x="167.4" y="216.3" width="1.5" height="1.0" fill="#8f8e8a"/><rect x="154.4" y="213.8" width="3.0" height="1.7" fill="#dddbd5"/><rect x="164.2" y="232.7" width="2.8" height="1.0" fill="#dddbd5"/><rect x="175.2" y="233.0" width="2.5" height="1.3" fill="#dddbd5"/><rect x="152.3" y="228.0" width="2.7" height="1.6" fill="#cfcdc7"/><rect x="158.1" y="231.9" width="1.6" height="1.9" fill="#777570"/><rect x="169.1" y="220.4" width="1.3" height="1.2" fill="#dddbd5"/><rect x="147.5" y="237.2" width="2.8" height="1.7" fill="#777570"/><rect x="155.0" y="215.4" width="2.3" height="1.1" fill="#dddbd5"/><rect x="171.3" y="224.4" width="2.7" height="1.1" fill="#777570"/><rect x="153.8" y="234.9" width="3.0" height="0.9" fill="#8f8e8a"/><rect x="165.8" y="236.1" width="2.7" height="0.8" fill="#dddbd5"/><rect x="173.9" y="227.2" width="1.6" height="1.2" fill="#777570"/><rect x="172.1" y="213.6" width="2.6" height="1.4" fill="#cfcdc7"/><rect x="172.6" y="220.6" width="1.3" height="1.8" fill="#cfcdc7"/><rect x="172.9" y="231.0" width="1.4" height="1.2" fill="#8f8e8a"/><rect x="181.2" y="228.6" width="2.1" height="1.3" fill="#8f8e8a"/><rect x="149.0" y="220.8" width="2.6" height="1.2" fill="#dddbd5"/><rect x="177.8" y="221.1" width="1.9" height="1.0" fill="#8f8e8a"/><rect x="169.9" y="222.1" width="1.5" height="0.9" fill="#8f8e8a"/><rect x="153.4" y="224.9" width="2.5" height="1.8" fill="#777570"/><rect x="166.1" y="227.3" width="2.7" height="0.9" fill="#777570"/><rect x="147.5" y="225.8" width="1.4" height="1.1" fill="#cfcdc7"/></g>
<path d="M33 124 L37 135 L42 148 L50 163 L58 178 L62 186" stroke="#4b3f33" stroke-width="2.6" fill="none"/>
<path d="M21 155 L30 162 L38 171 L52 176 L63 184" stroke="#5b4d3f" stroke-width="2.4" fill="none"/>
<path d="M55 124 L53 140 L50 160" stroke="#4b3f33" stroke-width="1.8" fill="none"/>
<ellipse cx="24" cy="130" rx="5" ry="5" fill="#9fcf63"/>
<ellipse cx="41" cy="126" rx="6" ry="2.5" fill="#a6d66a"/>
<ellipse cx="68" cy="157" rx="3.5" ry="3" fill="#27365e"/>
<rect x="66" y="160" width="5" height="4" fill="#d9c6b5"/>
<path d="M64 166 L71 163 L83 166 L85 197 L68 198 L66 185 L60 192 L58 190 Z" fill="#1e2a4b"/>
<rect x="70" y="196" width="11" height="38" fill="#b7aa88"/>
<rect x="71" y="233" width="6" height="3" fill="#555"/>
<ellipse cx="108" cy="153" rx="11" ry="3.8" fill="#e4dcc4"/>
<ellipse cx="106" cy="149" rx="8" ry="3" fill="#d8552d"/>
<ellipse cx="143" cy="163" rx="15" ry="4.5" transform="rotate(-28 143 163)" fill="#e7c7a9"/>
<ellipse cx="147" cy="160" rx="9" ry="3" transform="rotate(-28 147 160)" fill="#e06a3f"/>
<path d="M118 183 L130 190 L138 197" stroke="#6a6a66" stroke-width="2" fill="none"/>
<ellipse cx="139" cy="196" rx="4" ry="3" fill="#2e3a52"/>
<path d="M140 199 L150 198 L161 208 L163 219 L152 220 L143 213 L137 219 L135 217 Z" fill="#25304d"/>
<path d="M144 213 L160 216 L160 223 L154 228 L150 226 L143 221 Z" fill="#b9ab8a"/>
</g></g>
<rect x="95.7" y="123.1" width="1.5" height="114.5" fill="#f4f4f4"/>
<rect x="97.2" y="180.1" width="84.4" height="1.5" fill="#f4f4f4"/>
<!-- slide 2 -->
<rect x="16.3" y="254" width="169" height="127" fill="#fff" stroke="#9a978f" stroke-width=".8"/>
<!-- thumb2 film -->
<g filter="url(#bl)">
<rect x="17.7" y="255.6" width="165.6" height="119.4" fill="#030303"/>
<rect x="17.7" y="275.2" width="165.6" height="81.1" fill="#39424a"/>
<rect x="163" y="275.2" width="20.3" height="28" fill="#4a5055"/><rect x="163" y="303" width="20.3" height="53.3" fill="#1d2222"/>
<rect x="80" y="275.2" width="45" height="12" fill="#3d3a3a"/>
<ellipse cx="100" cy="279" rx="12" ry="4" fill="#6e3a32"/>
<ellipse cx="25" cy="300" rx="7" ry="14" fill="#9a3426"/>
<path d="M17.7 322 L40 314 L62 318 L80 330 L86 356.3 L17.7 356.3 Z" fill="#6d5040"/>
<path d="M43 290 Q52 276 68 280 Q78 288 76 310 L74 332 L50 336 L44 312 Z" fill="#2a201c"/>
<ellipse cx="64" cy="302" rx="9" ry="13" fill="#c2a898"/>
<path d="M56 318 L72 316 L78 335 L60 346 L48 335 Z" fill="#43322a"/>
<ellipse cx="38" cy="297" rx="6" ry="9.5" fill="#1c2740"/>
<ellipse cx="38" cy="297" rx="4.8" ry="7.8" fill="none" stroke="#a9c6f2" stroke-width="1.6"/>
<circle cx="38" cy="297" r="1.5" fill="#cfe0f8"/>
<rect x="37.5" y="306" width="1.2" height="50" fill="#a4a4a0"/>
<ellipse cx="84" cy="288" rx="5" ry="7" fill="#5a4f4a"/>
<rect x="90" y="283" width="14" height="22" fill="#232629"/>
<rect x="85.8" y="306" width="39.2" height="50.3" fill="#4e544c"/>
<rect x="89.5" y="317" width="32" height="32" fill="#7b6c50"/>
<rect x="89.5" y="317" width="32" height="6" fill="#9a8a6a"/>
<path d="M120 290 Q128 270 146 272 Q162 276 162 300 L160 318 L124 318 Z" fill="#1d1a19"/>
<ellipse cx="140" cy="298" rx="10" ry="12" fill="#a88a74"/>
<ellipse cx="135" cy="296" rx="3.6" ry="2.6" fill="none" stroke="#1a1614" stroke-width="1.1"/>
<ellipse cx="145" cy="296" rx="3.6" ry="2.6" fill="none" stroke="#1a1614" stroke-width="1.1"/>
<path d="M122 316 L160 312 L172 330 L172 356.3 L122 356.3 Z" fill="#141418"/>
<path d="M130 310 L152 308 L152 328 L142 340 L132 328 Z" fill="#bdd0e6"/>
<path d="M138 316 L145 316 L144 345 L139 345 Z" fill="#202126"/>
<path d="M152 312 L158 340 L150 355" stroke="#d8d8d0" stroke-width="1" fill="none"/>
<rect x="72" y="351" width="62" height="2.6" fill="#d0ccc0" opacity=".75"/>
</g>
<!-- slide 3 -->
<rect x="16.3" y="391" width="169.5" height="127.5" fill="#fff" stroke="#9a978f" stroke-width=".8"/>
<!-- thumb3 chart -->
<g fill="none" stroke="#b9b9b9" stroke-width="0.9">
<path d="M31 424.3H142.6M31 435.3H142.6M31 446.5H142.6M31 457H142.6M31 467.4H142.6M31 478.2H142.6"/>
</g>
<path d="M31 489.4H142.6" stroke="#9a9a9a" stroke-width="0.9"/>
<g>
<rect x="37.6" y="484.2" width="7.7" height="5.2" fill="#4f81bd"/>
<rect x="45.3" y="441.1" width="7.4" height="48.3" fill="#c0504d"/>
<rect x="64.7" y="444.4" width="7.3" height="45" fill="#4f81bd"/>
<rect x="72" y="488.1" width="7.8" height="1.3" fill="#c0504d"/>
<rect x="92.9" y="471.1" width="7.4" height="18.3" fill="#4f81bd"/>
<rect x="100.3" y="441.1" width="7.5" height="48.3" fill="#c0504d"/>
</g>
<rect x="157.1" y="457.5" width="3.9" height="3.3" fill="#4f81bd"/>
<rect x="157.1" y="463.3" width="3.9" height="3.3" fill="#c0504d"/>
<text x="162.5" y="460.9" font-family="Liberation Sans" font-size="3.6" fill="#333" textLength="18.8">Happiness</text>
<text x="162.5" y="466.6" font-family="Liberation Sans" font-size="3.6" fill="#333" textLength="16">Sickness</text>
<g font-family="Liberation Sans" font-size="3.9" font-weight="bold" fill="#333" text-anchor="end">
<text transform="translate(47,498.5) rotate(-45)">work</text>
<text transform="translate(79.8,498.5) rotate(-45)">drinking</text>
<text transform="translate(106.5,498.5) rotate(-45)">reality</text>
<text transform="translate(136.8,498.5) rotate(-45)">masturbation</text>
</g>

<rect x="121" y="355.4" width="7.1" height="134" fill="#4f81bd"/>
<rect x="128.1" y="355.4" width="7.5" height="134" fill="#c0504d"/>

<!-- slide 4 -->
<rect x="16.3" y="529.5" width="169.5" height="128" fill="#fff" stroke="#9a978f" stroke-width=".8"/>
<text x="56.3" y="598.9" font-family="Liberation Sans" font-size="15.8" font-weight="bold" fill="#111" stroke="#111" stroke-width=".35" textLength="95">THANK YOU</text>

<!-- slide 5 -->
<rect x="16.3" y="667.8" width="169.5" height="60" fill="#fff" stroke="#9a978f" stroke-width=".8"/>
</svg>

<!--/PANE-->
<div id="work" class="a"></div>
<div id="slide" class="a"></div>

<!-- chart -->
<div class="grid" style="top:232px;background:#0d0d0d;box-shadow:0 1px 0 #d8d8d8"></div>
<div class="grid" style="top:279px;background:#101010;box-shadow:0 1px 0 #d8d8d8"></div>
<div class="grid" style="top:325px;background:#1c1c1c;box-shadow:0 1px 0 #cfcfcf"></div>
<div class="grid" style="top:369px;background:#8a8a8a;box-shadow:0 1px 0 #4a4a4a"></div>
<div class="grid" style="top:415px;background:#3c3c3c;box-shadow:0 1px 0 #b8b8b8"></div>
<div class="grid" style="top:460px;background:#4c4c4c;box-shadow:0 1px 0 #b0b0b0"></div>
<div class="grid" style="top:507px;background:#5e5e5e;box-shadow:0 1px 0 #a8a8a8"></div>
<div class="bar b" style="left:332px;top:484.3px;width:31.8px;height:23.5px"></div>
<div class="bar r" style="left:363.8px;top:303.1px;width:31.1px;height:204.7px"></div>
<div class="bar b" style="left:446.6px;top:316.2px;width:31.2px;height:191.6px"></div>
<div class="bar r" style="left:477.8px;top:499.2px;width:32.2px;height:8.6px"></div>
<div class="bar b" style="left:565px;top:429.2px;width:31px;height:78.6px"></div>
<div class="bar r" style="left:596px;top:303px;width:31.9px;height:204.8px"></div>
<div class="bar b" style="left:684px;top:86.7px;width:31px;height:421.1px"></div>
<div class="bar r" style="left:715px;top:86.7px;width:32px;height:421.1px"></div>
<div class="lab" style="right:662px;top:537px">work</div>
<div class="lab" style="right:536px;top:538.5px">drinking</div>
<div class="lab" style="right:419px;top:539px">reality</div>
<div class="lab" style="right:281.2px;top:535px">masturbation</div>
<div class="bar b" style="left:835px;top:371.1px;width:17px;height:16.8px"></div>
<div class="bar r" style="left:835px;top:395px;width:17px;height:16.6px"></div>
<div class="t" style="left:858.5px;top:372.2px;font-size:15.9px;font-weight:bold;color:#111;-webkit-text-stroke:.25px #111">Happiness</div>
<div class="t" style="left:858.5px;top:396px;font-size:15.9px;font-weight:bold;color:#111;-webkit-text-stroke:.25px #111">Sickness</div>
<div id="notes" class="a"></div>
<div class="t" style="left:202px;top:682px;font-size:11px;color:#2b2b2b">Click to add notes</div>
<div id="status" class="a"></div>
<div class="t" style="left:3.4px;top:713px;font-size:9px;color:#333">Slide 11 of 12</div>
<div class="a" style="left:61px;top:709px;width:1px;height:15px;background:#8a8d92"></div>
<div class="t" style="left:71.8px;top:713px;font-size:8.2px;color:#333">"SRP"</div>
</body></html>
